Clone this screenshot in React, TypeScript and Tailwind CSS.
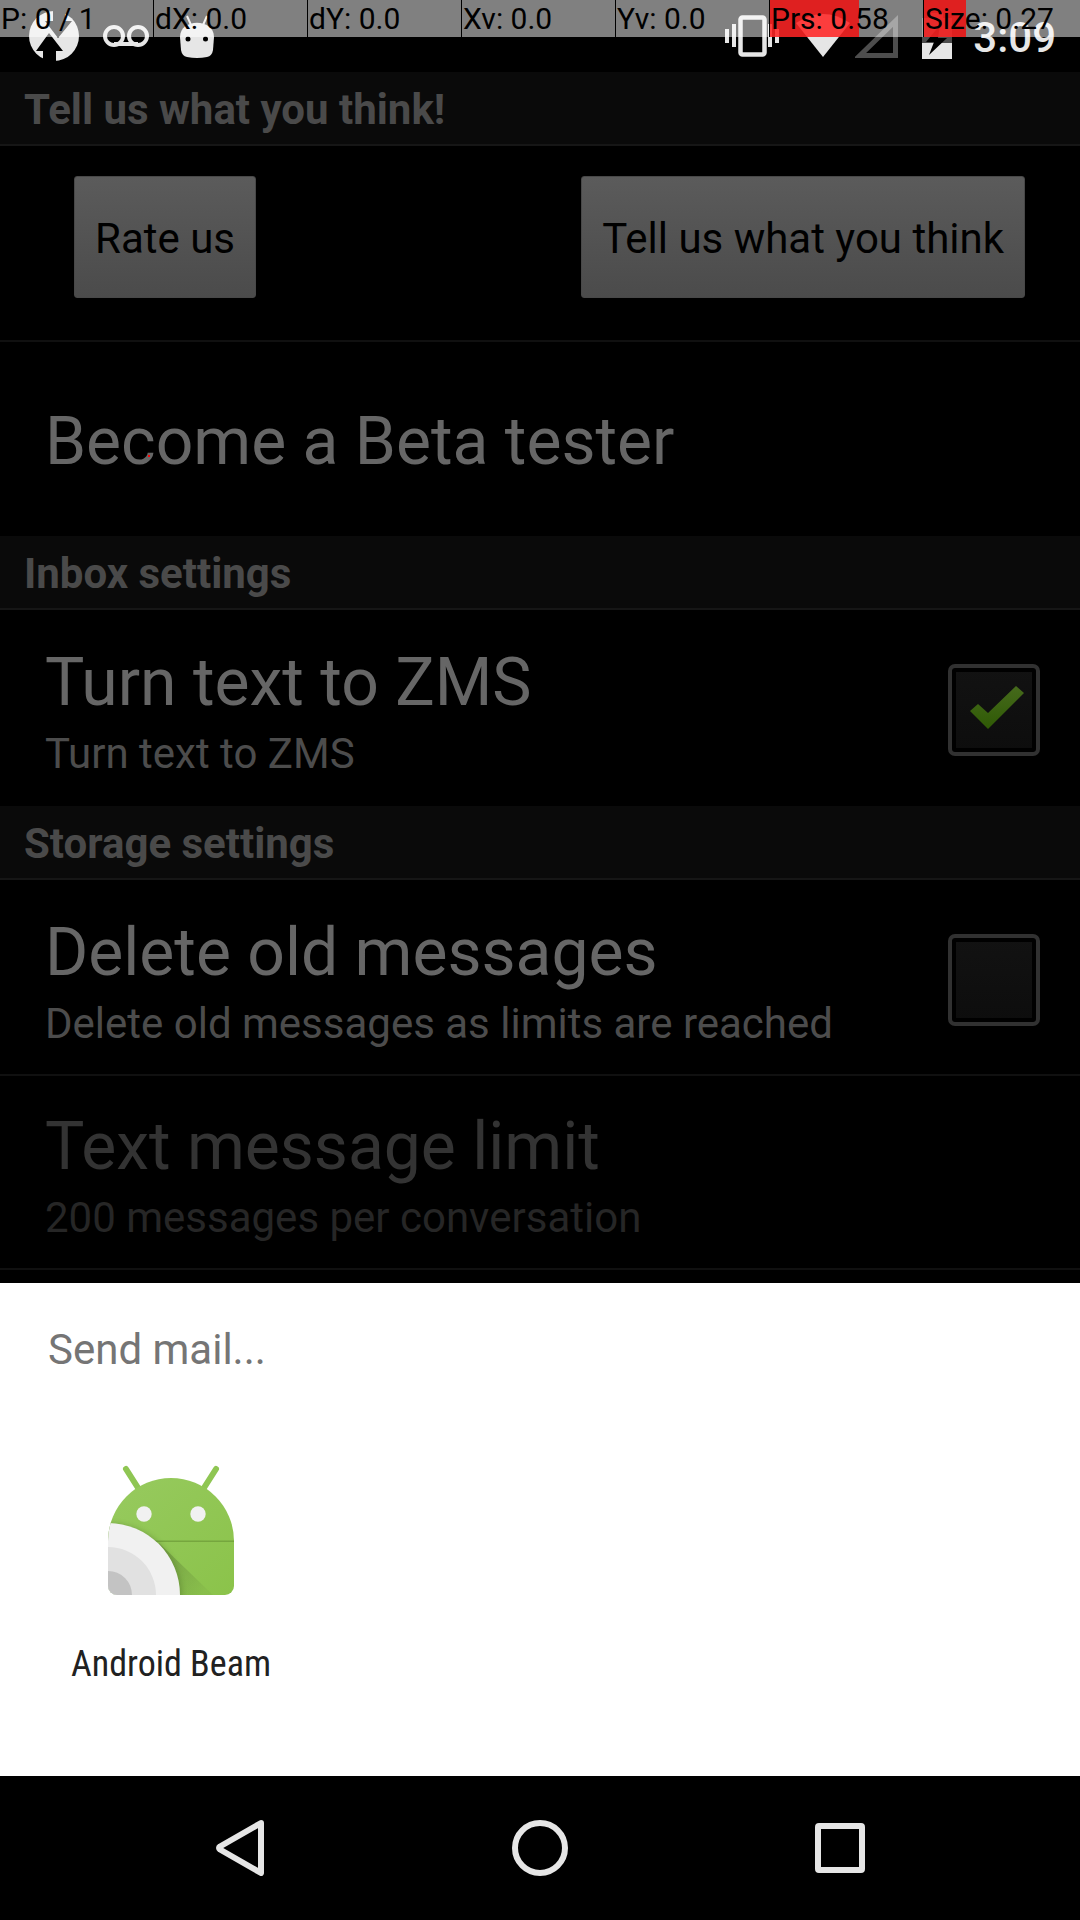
import type { ReactNode } from "react";

function PointerCell({ label, fill }: { label: string; fill?: number }) {
  return (
    <div className="relative min-w-0 border-r border-black last:border-r-0">
      {fill !== undefined && (
        <div className="absolute inset-y-0 left-0 bg-[#ff0000]/75" style={{ width: `${fill * 100}%` }} />
      )}
      <span className="relative block whitespace-nowrap pl-px text-[30px] leading-[37px] text-black">{label}</span>
    </div>
  );
}

function StatusBar() {
  return (
    <header className="relative flex h-[72px] items-center justify-between bg-black pl-7 pr-6 text-[#e6e6e6]">
      <div className="flex items-center gap-[23px]">
        <svg width="52" height="52" viewBox="0 0 52 52" aria-hidden="true">
          <circle cx="26" cy="26" r="25" fill="#e6e6e6" />
          <path d="M8 41 21 23l14 18h-7v11H15V41z" fill="#000" />
          <path d="M25 0h12v11h7L30 28 17 11h8z" fill="#000" />
        </svg>
        <svg width="46" height="22" viewBox="0 0 46 22" fill="none" stroke="#e6e6e6" strokeWidth="4" aria-hidden="true">
          <circle cx="11" cy="11" r="9" />
          <circle cx="35" cy="11" r="9" />
          <path d="M11 19h24" />
        </svg>
        <svg className="ml-2" width="34" height="46" viewBox="0 0 34 46" aria-hidden="true">
          <path d="M7 3l4 9M27 3l-4 9" stroke="#e6e6e6" strokeWidth="2" />
          <path d="M0 24C0 5 34 5 34 24l-1 13q-1 6-6 7-10 2-20 0-5-1-6-7z" fill="#e6e6e6" />
          <circle cx="8" cy="26" r="2.5" fill="#000" />
          <circle cx="25.500" cy="26" r="2.500" fill="#000" />
        </svg>
      </div>
      <div className="flex items-center">
        <svg width="54" height="42" viewBox="0 0 54 42" fill="#e6e6e6" aria-hidden="true">
          <path d="M0 14h4v14H0zM7 9h4v23H7zM43 9h4v23h-4zM50 14h4v14h-4z" />
          <rect x="15.500" y="2.500" width="24" height="37" rx="2" fill="none" stroke="#e6e6e6" strokeWidth="4.500" />
        </svg>
        <svg className="ml-[17px]" width="54" height="44" viewBox="0 0 54 44" aria-hidden="true">
          <path d="M0 9Q27-9 54 9L27 43z" fill="#e6e6e6" />
        </svg>
        <svg className="ml-[5px]" width="43" height="43" viewBox="0 0 43 43" aria-hidden="true">
          <path d="M5 40.500H40.500V6z" fill="none" stroke="#4d4d4d" strokeWidth="5" />
        </svg>
        <svg className="ml-6" width="30" height="46" viewBox="0 0 30 46" aria-hidden="true">
          <path d="M0 5h9V0h12v5h9v25H0z" fill="#4d4d4d" />
          <path d="M0 30h30v16H0z" fill="#e6e6e6" />
          <path d="M18 12 4 29h8L7 42 25 25h-9z" fill="#000" />
        </svg>
        <span className="ml-[21px] pt-1 text-[42px] font-medium leading-[50px]">3:09</span>
      </div>
      <div className="absolute inset-x-0 top-0 grid h-[37px] grid-cols-7 bg-white/50 pr-[2px]">
        <PointerCell label="P: 0 / 1" />
        <PointerCell label="dX: 0.0" />
        <PointerCell label="dY: 0.0" />
        <PointerCell label="Xv: 0.0" />
        <PointerCell label="Yv: 0.0" />
        <PointerCell label="Prs: 0.58" fill={0.58} />
        <PointerCell label="Size: 0.27" fill={0.27} />
      </div>
    </header>
  );
}

function Section({ title, children }: { title: string; children: ReactNode }) {
  return (
    <section className="pb-[2px]">
      <h2 className="border-b-2 border-[#161616] bg-[#0a0a0a] px-6 pt-[10px] pb-[6px] text-[42px] font-bold leading-[56px] text-[#4a4a4a]">
        {title}
      </h2>
      <div>{children}</div>
    </section>
  );
}

function Titles({ title, summary, dim }: { title: string; summary?: string; dim?: boolean }) {
  return (
    <span className="block min-w-0 flex-1">
      <span className={`block text-[66px] leading-[88px] ${dim ? "text-[#333333]" : "text-[#666666]"}`}>{title}</span>
      {summary && (
        <span className={`block text-[42px] leading-[54px] ${dim ? "text-[#262626]" : "text-[#4c4c4c]"}`}>{summary}</span>
      )}
    </span>
  );
}

const row = "flex w-full min-h-[194px] items-center border-t-2 pl-[45px] pr-10 text-left";

function CheckRow({ id, title, summary, checked }: { id: string; title: string; summary: string; checked?: boolean }) {
  return (
    <label htmlFor={id} className={`${row} border-transparent pt-[27px] pb-[23px]`}>
      <Titles title={title} summary={summary} />
      <span className="relative block size-[92px] shrink-0">
        <input
          id={id}
          type="checkbox"
          defaultChecked={checked}
          className="peer block size-[92px] appearance-none rounded-[7px] border-4 border-[#313131] bg-linear-to-b from-[#121212] to-[#0d0d0d] shadow-[inset_0_0_0_4px_#000]"
        />
        <svg
          className="pointer-events-none absolute inset-0 hidden peer-checked:block"
          width="92"
          height="92"
          viewBox="0 0 92 92"
          aria-hidden="true"
        >
          <defs>
            <linearGradient id="tick" x1="0" y1="0" x2="0" y2="1">
              <stop offset="0" stopColor="#466a1c" />
              <stop offset="1" stopColor="#2f5a05" />
            </linearGradient>
          </defs>
          <path d="M22 47l8-7 10 9 28-27 8 7-36 36z" fill="url(#tick)" />
        </svg>
      </span>
    </label>
  );
}

const feedbackButton =
  "min-h-[122px] rounded-[3px] border border-[#484848] bg-linear-to-b from-[#5b5b5b] to-[#4b4b4b] px-5 pt-1 text-[42px] leading-[56px] text-black";

function BeamIcon() {
  return (
    <svg width="144" height="144" viewBox="0 0 144 144" aria-hidden="true">
      <defs>
        <linearGradient id="body" x1="0" y1="0" x2="1" y2="1">
          <stop offset="0" stopColor="#97ca5f" />
          <stop offset="1" stopColor="#8bc34a" />
        </linearGradient>
        <linearGradient id="cast" gradientUnits="userSpaceOnUse" x1="62" y1="100" x2="104" y2="134">
          <stop offset="0" stopColor="#5a7a35" stopOpacity=".45" />
          <stop offset="1" stopColor="#5a7a35" stopOpacity=".08" />
        </linearGradient>
        <clipPath id="shape">
          <path d="M9 82a63 63 0 0 1 126 0v45a9 9 0 0 1-9 9H18a9 9 0 0 1-9-9z" />
        </clipPath>
        <filter id="soft">
          <feGaussianBlur stdDeviation="2.500" />
        </filter>
      </defs>
      <path d="M27 10l14 22M117 10l-14 22" stroke="#8fc653" strokeWidth="6" strokeLinecap="round" />
      <g clipPath="url(#shape)">
        <rect x="9" y="19" width="126" height="117" fill="url(#body)" />
        <rect x="9" y="81.500" width="126" height="1.500" fill="#6f9d3a" opacity=".8" />
        <path d="M60 84l54 52H60z" fill="url(#cast)" />
        <circle cx="10" cy="137" r="73" fill="#4a6b28" opacity=".35" filter="url(#soft)" />
        <circle cx="9" cy="136" r="72" fill="#f1f1f1" />
        <circle cx="9" cy="136" r="48" fill="#e1e1e1" />
        <circle cx="9" cy="136" r="24" fill="#c3c3c3" />
      </g>
      <circle cx="45" cy="55" r="7.700" fill="#f1f1f1" />
      <circle cx="99" cy="55" r="7.700" fill="#f1f1f1" />
    </svg>
  );
}

export default function App() {
  return (
    <div className="flex min-h-screen flex-col bg-black font-['Roboto',sans-serif]">
      <StatusBar />
      <main className="flex-1">
        <Section title="Tell us what you think!">
          <div className="flex min-h-[194px] items-start justify-between pt-[30px] pl-[74px] pr-[55px]">
            <button type="button" className={feedbackButton}>Rate us</button>
            <button type="button" className={feedbackButton}>Tell us what you think</button>
          </div>
          <button type="button" className={`${row} relative border-[#101010] pt-7 pb-5`}>
            <Titles title="Become a Beta tester" />
            <span className="absolute left-[148px] top-[113px] size-[2px] bg-[#ff0000]" />
          </button>
        </Section>
        <Section title="Inbox settings">
          <CheckRow id="zms" title="Turn text to ZMS" summary="Turn text to ZMS" checked />
        </Section>
        <Section title="Storage settings">
          <CheckRow id="delete-old" title="Delete old messages" summary="Delete old messages as limits are reached" />
          <button type="button" disabled className={`${row} border-[#101010] pt-[27px] pb-[23px]`}>
            <Titles title="Text message limit" summary="200 messages per conversation" dim />
          </button>
          <div className="border-t-2 border-[#101010]" />
        </Section>
      </main>
      <section className="min-h-[493px] bg-white px-6" aria-labelledby="sheet-title">
        <h2 id="sheet-title" className="px-6 pt-[39px] text-[42px] leading-[56px] text-[#757575]">
          Send mail...
        </h2>
        <button type="button" className="mt-[81px] flex w-[294px] flex-col items-center">
          <BeamIcon />
          <span className="mt-[37px] whitespace-nowrap font-['Roboto_Condensed','Roboto',sans-serif] text-[36px] leading-[48px] text-[#212121]">
            Android Beam
          </span>
        </button>
      </section>
      <nav className="grid h-[144px] grid-cols-3 px-[90px]">
        <button type="button" aria-label="Back" className="flex items-center justify-center">
          <svg width="56" height="56" viewBox="0 0 56 56" fill="none" stroke="#e6e6e6" strokeWidth="6" strokeLinejoin="round" aria-hidden="true">
            <path d="M49 3 8 26.500q-2 1.500 0 3L49 53z" />
          </svg>
        </button>
        <button type="button" aria-label="Home" className="flex items-center justify-center">
          <svg width="56" height="56" viewBox="0 0 56 56" fill="none" stroke="#e6e6e6" strokeWidth="6" aria-hidden="true">
            <circle cx="28" cy="28" r="25" />
          </svg>
        </button>
        <button type="button" aria-label="Recent apps" className="flex items-center justify-center">
          <svg width="50" height="50" viewBox="0 0 50 50" fill="none" stroke="#e6e6e6" strokeWidth="6" aria-hidden="true">
            <rect x="3" y="3" width="44" height="44" rx="1" />
          </svg>
        </button>
      </nav>
    </div>
  );
}
